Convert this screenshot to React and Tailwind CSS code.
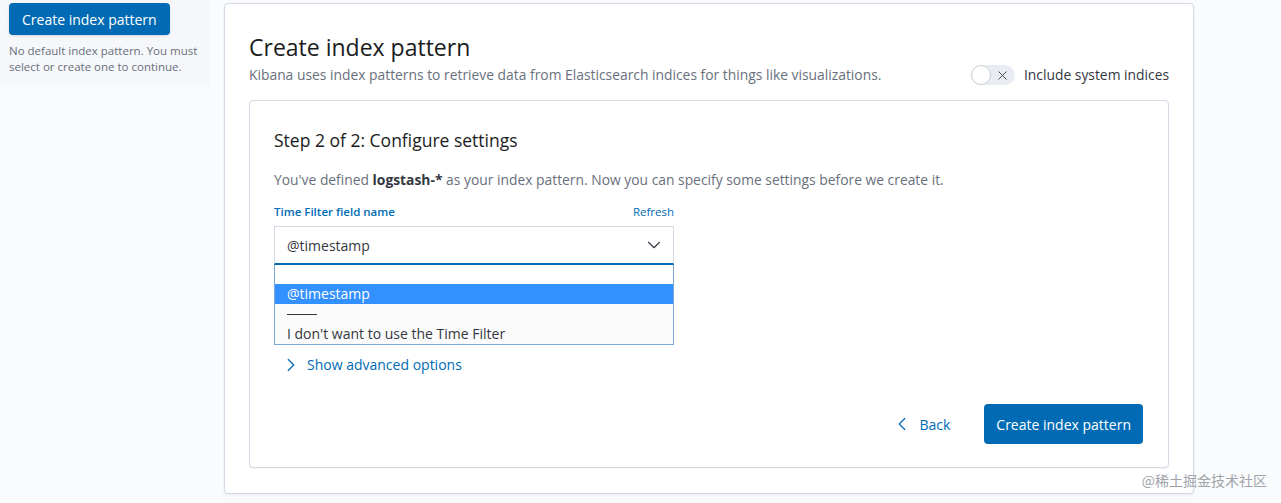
import { ChevronDown, ChevronRight, ChevronLeft, X } from 'lucide-react';

const App = () => {
  return (
    <div
      className="relative flex h-[503px] w-full overflow-hidden bg-[#fafbfd] text-[#343741]"
      style={{ fontFamily: '"Open Sans", "Noto Sans", sans-serif' }}
    >
      {/* Sidebar */}
      <div className="w-[210px] shrink-0 self-start bg-[#f5f7fa] pb-[10px]">
        <div className="px-[9px] pt-[3px]">
          <button className="h-8 rounded-[4px] bg-[#006bb4] px-[13px] text-[14px] text-white shadow-sm">
            Create index pattern
          </button>
          <p className="mt-[8px] text-[11.5px] leading-[16px] text-[#69707d]">
            No default index pattern. You must select or create one to continue.
          </p>
        </div>
      </div>

      {/* Main panel */}
      <div className="ml-[14px] mt-[3px] h-[491px] w-[970px] shrink-0 rounded-[4px] border border-[#d3dae6] bg-white px-[24px] pt-[27px] shadow-[0_1px_3px_rgba(0,0,0,0.08)]">
        <div className="flex items-end justify-between">
          <div>
            <h1 className="text-[23px] leading-[32px] text-[#1a1c21]">Create index pattern</h1>
            <p className="mt-[2px] text-[13.85px] leading-[20px] text-[#69707d]">
              Kibana uses index patterns to retrieve data from Elasticsearch indices for things like visualizations.
            </p>
          </div>
          <div className="flex items-center gap-[9px]">
            <div className="relative flex h-[20px] w-[44px] items-center rounded-full bg-[#e9edf3]">
              <div className="h-[20px] w-[20px] rounded-full border border-[#c7ced8] bg-white" />
              <X className="ml-[4px] h-[15px] w-[15px] text-[#343741]" strokeWidth={1.4} />
            </div>
            <span className="text-[13.85px] leading-[20px] text-[#343741]">Include system indices</span>
          </div>
        </div>

        {/* Inner panel */}
        <div className="mt-[15px] h-[368px] rounded-[4px] border border-[#d3dae6] bg-white px-[24px] pt-[27px] shadow-[0_1px_2px_rgba(0,0,0,0.05)]">
          <h2 className="text-[17.5px] leading-[24px] text-[#1a1c21]">Step 2 of 2: Configure settings</h2>
          <p className="mt-[18px] text-[13.85px] leading-[20px] text-[#69707d]">
            You've defined <span className="font-bold text-[#343741]">logstash-*</span> as your index pattern. Now you can specify some settings before we create it.
          </p>

          <div className="mt-[13px] w-[400px]">
            <div className="flex items-center justify-between text-[11.5px] leading-[18px]">
              <span className="font-semibold text-[#006bb4]">Time Filter field name</span>
              <span className="text-[#006bb4]">Refresh</span>
            </div>
            <div className="mt-[5px] flex h-[39px] items-center justify-between border border-b-2 border-[#d3dae6] border-b-[#006bb4] pl-[12px] pr-[8px]">
              <span className="text-[14px] text-[#343741]">@timestamp</span>
              <ChevronDown className="h-[22px] w-[22px] text-[#343741]" strokeWidth={1.2} />
            </div>
            <div className="border border-t-0 border-[#7aa7d6] bg-[#fbfbfb] text-[14px] leading-[20px]">
              <div className="h-[19px] bg-white" />
              <div className="bg-[#3390ff] pl-[12px] text-white">@timestamp</div>
              <div className="flex h-[20px] items-center pl-[12px]">
                <div className="mt-[1px] h-px w-[30px] bg-[#343741]" />
              </div>
              <div className="pl-[12px] text-[#343741]">I don't want to use the Time Filter</div>
            </div>
          </div>

          <div className="mt-[9px] flex items-center gap-[5px] pl-[6px] text-[14px] leading-[20px] text-[#006bb4]">
            <ChevronRight className="h-[22px] w-[22px]" strokeWidth={1.3} />
            <span>Show advanced options</span>
          </div>

          <div className="mt-[28px] flex items-center justify-end gap-[34px] pr-[1px]">
            <div className="flex items-center gap-[6px] text-[14px] text-[#006bb4]">
              <ChevronLeft className="h-[22px] w-[22px]" strokeWidth={1.3} />
              <span>Back</span>
            </div>
            <button className="h-[40px] rounded-[4px] bg-[#006bb4] px-[12px] text-[14px] text-white">
              Create index pattern
            </button>
          </div>
        </div>
      </div>

      {/* Watermark */}
      <span
        className="absolute bottom-[12px] right-[14px] text-[14px] text-[#a0a4aa]"
        style={{ fontFamily: '"Noto Sans CJK SC", "Noto Sans", sans-serif' }}
      >
        @稀土掘金技术社区
      </span>
    </div>
  );
};

export default App;
